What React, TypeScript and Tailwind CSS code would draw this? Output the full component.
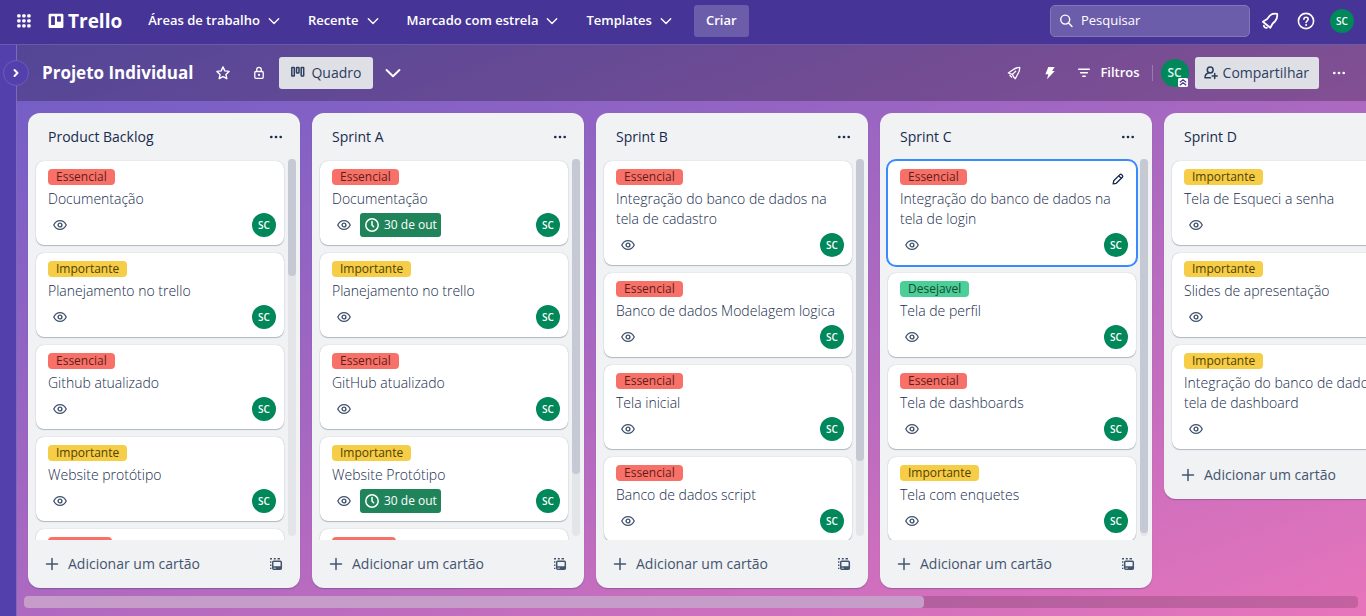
import type { ReactNode } from "react";

type Tag = "Essencial" | "Importante" | "Desejavel";

interface CardData {
  tag: Tag;
  title: string;
  due?: string;
  active?: boolean;
}

interface ListData {
  name: string;
  cards: CardData[];
  thumb?: number;
}

const lists: ListData[] = [
  {
    name: "Product Backlog",
    thumb: 31,
    cards: [
      { tag: "Essencial", title: "Documentação" },
      { tag: "Importante", title: "Planejamento no trello" },
      { tag: "Essencial", title: "Github atualizado" },
      { tag: "Importante", title: "Website protótipo" },
      { tag: "Essencial", title: "" },
    ],
  },
  {
    name: "Sprint A",
    thumb: 83.6,
    cards: [
      { tag: "Essencial", title: "Documentação", due: "30 de out" },
      { tag: "Importante", title: "Planejamento no trello" },
      { tag: "Essencial", title: "GitHub atualizado" },
      { tag: "Importante", title: "Website Protótipo", due: "30 de out" },
      { tag: "Essencial", title: "" },
    ],
  },
  {
    name: "Sprint B",
    thumb: 80.1,
    cards: [
      { tag: "Essencial", title: "Integração do banco de dados na tela de cadastro" },
      { tag: "Essencial", title: "Banco de dados Modelagem logica" },
      { tag: "Essencial", title: "Tela inicial" },
      { tag: "Essencial", title: "Banco de dados script" },
    ],
  },
  {
    name: "Sprint C",
    thumb: 99.2,
    cards: [
      { tag: "Essencial", title: "Integração do banco de dados na tela de login", active: true },
      { tag: "Desejavel", title: "Tela de perfil" },
      { tag: "Essencial", title: "Tela de dashboards" },
      { tag: "Importante", title: "Tela com enquetes" },
    ],
  },
  {
    name: "Sprint D",
    cards: [
      { tag: "Importante", title: "Tela de Esqueci a senha" },
      { tag: "Importante", title: "Slides de apresentação" },
      { tag: "Importante", title: "Integração do banco de dados na tela de dashboard" },
    ],
  },
];

const tagStyles: Record<Tag, string> = {
  Essencial: "bg-[#f87168] text-[#5d1f1a]",
  Importante: "bg-[#f5cd47] text-[#533f04]",
  Desejavel: "bg-[#4bce97] text-[#164b35]",
};

function Icon({ size = 16, box = 16, children }: { size?: number; box?: number; children: ReactNode }) {
  return (
    <svg
      width={size}
      height={size}
      viewBox={`0 0 ${box} ${box}`}
      fill="none"
      stroke="currentColor"
      strokeWidth="1.5"
      strokeLinecap="round"
      strokeLinejoin="round"
      className="shrink-0"
      aria-hidden="true"
    >
      {children}
    </svg>
  );
}

function ChevronDown({ size = 16 }: { size?: number }) {
  return (
    <Icon size={size}>
      <path d="m3.300 5.800 4.700 4.600 4.700-4.600" strokeWidth="1.400" />
    </Icon>
  );
}

function Dots() {
  return (
    <Icon>
      <g fill="currentColor" stroke="none">
        <circle cx="3.300" cy="8" r="1.350" />
        <circle cx="8" cy="8" r="1.350" />
        <circle cx="12.700" cy="8" r="1.350" />
      </g>
    </Icon>
  );
}

function AppsIcon() {
  const spots = [3, 8, 13];
  return (
    <Icon>
      <g fill="currentColor" stroke="none">
        {spots.map((y) => spots.map((x) => <rect key={`${x}-${y}`} x={x - 1.8} y={y - 1.8} width="3.4" height="3.4" rx="1" />))}
      </g>
    </Icon>
  );
}

function TrelloMark() {
  return (
    <svg width="16" height="16" viewBox="0 0 16 16" className="shrink-0" aria-hidden="true">
      <path
        fill="white"
        fillRule="evenodd"
        d="M2 .7h12c.8 0 1.4.6 1.4 1.400v11.600c0 .8-.6 1.400-1.400 1.400H2c-.8 0-1.400-.6-1.400-1.400V2.100C.6 1.300 1.200.7 2 .7ZM3.800 3.300c-.4 0-.7.3-.7.7v7.400c0 .4.300.7.700.7h2.400c.4 0 .7-.3.7-.7V4c0-.4-.3-.7-.7-.7H3.800Zm5.900 0c-.4 0-.7.3-.7.7v4.100c0 .4.300.7.700.7h2.500c.4 0 .7-.3.7-.7V4c0-.4-.3-.7-.7-.7H9.700Z"
      />
    </svg>
  );
}

function BellIcon() {
  return (
    <Icon size={20} box={20}>
      <g strokeWidth="1.800">
        <path d="M2.900 10.700 7.200 8 9.500 5c1.700-2.200 4.400-2.600 7.700-2.200.3 3.200-.2 5.800-2.300 7.700l-2.200 2-2.400 4.300Z" />
        <path d="M3.900 14.700c0 1.400 1.400 2.400 3 2" />
      </g>
    </Icon>
  );
}

function HelpIcon() {
  return (
    <Icon size={20} box={20}>
      <g strokeWidth="1.600">
        <circle cx="10" cy="10" r="7.600" />
        <path d="M7.900 8.300c0-1.300.9-2.100 2.100-2.100s2.200.8 2.200 2c0 1.500-2.100 1.700-2.100 3.300" />
      </g>
      <circle cx="10.100" cy="13.900" r="1" fill="currentColor" stroke="none" />
    </Icon>
  );
}

function EyeIcon() {
  return (
    <Icon>
      <path d="M1.800 8C3 5.300 5.300 3.700 8 3.700S13 5.300 14.200 8C13 10.700 10.700 12.300 8 12.300S3 10.700 1.800 8Z" strokeWidth="1.300" />
      <circle cx="8" cy="8" r="1.900" strokeWidth="1.400" />
    </Icon>
  );
}

function TemplateIcon() {
  return (
    <Icon>
      <path d="M2 2.700h2M5.800 2.700h2M9.500 2.700H12M2.700 5.200v1.500M2.700 8.500V10M2.700 11.800v1.300" strokeWidth="1.400" strokeLinecap="butt" />
      <rect x="4.700" y="5.200" width="8.600" height="8" rx="1" strokeWidth="1.500" />
      <path d="M5 11h8M8.500 12.300h4.500" strokeWidth="1.500" />
    </Icon>
  );
}

function Avatar({ large = false }: { large?: boolean }) {
  return (
    <span
      className={
        large
          ? "flex size-7 shrink-0 items-center justify-center rounded-full bg-[#00875a] text-xs font-semibold text-[#dcf5ea]"
          : "flex size-6 shrink-0 items-center justify-center rounded-full bg-[#00875a] text-[10px] font-semibold text-white"
      }
    >
      SC
    </span>
  );
}

function IconButton({ label, children }: { label: string; children: ReactNode }) {
  return (
    <button type="button" aria-label={label} className="flex size-8 shrink-0 items-center justify-center rounded-[3px] hover:bg-white/20">
      {children}
    </button>
  );
}

function TopBar() {
  return (
    <header className="flex h-[45px] shrink-0 items-center border-b border-[#6a5ba9] bg-[#463596] px-2 pb-0.5 text-[13px] font-semibold text-white">
      <IconButton label="Mais aplicativos">
        <AppsIcon />
      </IconButton>
      <a href="#" className="flex items-center gap-1 px-2 text-[19px] leading-6 font-bold">
        <TrelloMark />
        Trello
      </a>
      <nav className="ml-1.5 flex items-center gap-0.5">
        {["Áreas de trabalho", "Recente", "Marcado com estrela", "Templates"].map((item) => (
          <button key={item} type="button" className="flex h-8 items-center gap-1.5 rounded-[3px] px-3 whitespace-nowrap hover:bg-white/20">
            {item}
            <ChevronDown />
          </button>
        ))}
      </nav>
      <button type="button" className="ml-2 h-8 rounded-[3px] bg-[#6c5dab] px-3">
        Criar
      </button>
      <div className="ml-auto flex items-center gap-1">
        <label className="flex h-8 w-50 items-center gap-1.5 rounded-[5px] border border-[#8376b8] bg-[#6c5dab] px-2 font-normal">
          <Icon>
            <circle cx="6.200" cy="6.600" r="4.500" strokeWidth="1.400" />
            <path d="m9.600 10 3.400 3.400" strokeWidth="1.400" />
          </Icon>
          <input type="search" placeholder="Pesquisar" aria-label="Pesquisar" className="min-w-0 flex-1 bg-transparent outline-none placeholder:text-white" />
        </label>
        <IconButton label="Notificações">
          <BellIcon />
        </IconButton>
        <IconButton label="Informações">
          <HelpIcon />
        </IconButton>
        <IconButton label="Conta">
          <Avatar />
        </IconButton>
      </div>
    </header>
  );
}

function BoardBar() {
  return (
    <div className="flex h-14 shrink-0 items-center gap-1 bg-black/24 pr-[11px] pl-[15px] text-[13px] font-semibold text-white">
      <h1 className="px-2.5 text-[17px] font-bold whitespace-nowrap">Projeto Individual</h1>
      <IconButton label="Marcar com estrela">
        <Icon>
          <path d="m8 1.900 1.800 4 4.300.5-3.200 3 .9 4.300L8 11.600l-3.800 2.100.9-4.300-3.200-3 4.300-.5Z" strokeWidth="1.400" />
        </Icon>
      </IconButton>
      <IconButton label="Visibilidade">
        <Icon>
          <rect x="3.800" y="6.500" width="8.400" height="6.800" rx="1" strokeWidth="1.300" />
          <path d="M5.700 6.300V4.700a2.300 2.300 0 0 1 4.600 0v1.600" strokeWidth="1.300" />
          <circle cx="8" cy="9.900" r="1.100" fill="currentColor" stroke="none" />
        </Icon>
      </IconButton>
      <button type="button" className="flex h-8 items-center gap-1.5 rounded-[3px] bg-[#dfe0e6] px-3 text-sm font-medium text-[#2c3e5d]">
        <Icon size={14} box={14}>
          <rect x="0.800" y="1.500" width="2.500" height="8.600" rx="0.500" strokeWidth="1.500" />
          <rect x="5.500" y="1.500" width="2.500" height="5.600" rx="0.500" strokeWidth="1.500" />
          <rect x="10.200" y="1.500" width="2.500" height="8.600" rx="0.500" strokeWidth="1.500" />
        </Icon>
        Quadro
      </button>
      <IconButton label="Visualizações">
        <ChevronDown size={22} />
      </IconButton>
      <div className="ml-auto flex items-center gap-1">
        <IconButton label="Power-Ups">
          <Icon>
            <path d="M2.300 8 6.300 5.300C8.700 3.300 11 2.400 13.700 2.300c.1 2.400-.3 4.200-1.500 6L9.300 13.700 7.600 12 6.500 9.400 2.300 8Z" strokeWidth="1.300" />
            <path d="m6.500 9.400 3.200-3.200M3.900 10.300l1.700 1.700" strokeWidth="1.300" />
          </Icon>
        </IconButton>
        <IconButton label="Automação">
          <Icon>
            <path d="M6.300 2h6.400l-2.600 4.100h2.700L5 14.300l1.300-5.100H3.400Z" fill="currentColor" stroke="none" />
          </Icon>
        </IconButton>
        <button type="button" className="flex h-8 items-center gap-2 rounded-[3px] pr-1 pl-1.5">
          <Icon>
            <path d="M2.700 4.300h10.600M4.700 7.800h6.600M6.800 11.300h2.400" strokeWidth="1.500" />
          </Icon>
          Filtros
        </button>
        <span className="mx-1 h-4 w-px bg-white/25" />
        <span className="relative mr-0.5">
          <Avatar large />
          <svg width="10" height="9" viewBox="0 0 10 9" className="absolute right-px bottom-0" aria-hidden="true">
            <rect width="10" height="9" rx="1.500" fill="white" />
            <path d="M1.800 4.200 5 1.800l3.200 2.400M1.800 7.200 5 4.800l3.200 2.400" fill="none" stroke="#4834a0" strokeWidth="1.300" />
          </svg>
        </span>
        <button type="button" className="flex h-8 items-center gap-1 rounded-[3px] bg-[#dfe0e6] pr-2.5 pl-2 text-sm font-medium text-[#2c3e5d]">
          <Icon>
            <circle cx="7.200" cy="5" r="2.900" />
            <path d="M5.600 7.800C3.300 8.600 2 10 2 12.700h5.500M11.700 8.500v5M9.200 11h5" />
          </Icon>
          Compartilhar
        </button>
        <IconButton label="Menu do quadro">
          <Dots />
        </IconButton>
      </div>
    </div>
  );
}

function Card({ card }: { card: CardData }) {
  return (
    <article
      className={
        card.active
          ? "relative shrink-0 rounded-lg bg-white py-2 pr-2 pl-3 outline-2 outline-[#388bff]"
          : "relative shrink-0 rounded-lg bg-white py-2 pr-2 pl-3 shadow-[0_1px_1px_#091e4240,0_0_1px_#091e424f]"
      }
    >
      {card.title ? (
        <>
          <span className={`mb-1 block h-4 w-fit rounded px-2 text-xs leading-4 font-medium ${tagStyles[card.tag]}`}>{card.tag}</span>
          <h3 className="mb-1 text-sm leading-5 font-light text-[#172b4d]">{card.title}</h3>
          <div className="flex h-6 items-center text-[#44546f]">
            <span className="flex size-6 items-center justify-center">
              <EyeIcon />
            </span>
            {card.due && (
              <span className="ml-1 flex h-6 items-center gap-1 rounded-[3px] bg-[#1f845a] px-1 text-xs font-medium text-white">
                <Icon>
                  <circle cx="8" cy="8" r="6.200" />
                  <path d="M8 4.500V8l1.600 1.800" />
                </Icon>
                {card.due}
              </span>
            )}
            <span className="ml-auto">
              <Avatar />
            </span>
          </div>
        </>
      ) : (
        <span aria-label={card.tag} className={`block h-4 w-16 rounded ${tagStyles[card.tag]}`} />
      )}
      {card.active && (
        <button type="button" aria-label="Editar cartão" className="absolute top-0.5 right-0.5 flex size-8 items-center justify-center text-[#172b4d]">
          <Icon size={14}>
            <path d="m2.500 13.500.6-3.500 7-7c.6-.6 1.400-.6 2 0l.9.9c.6.6.6 1.400 0 2l-7 7ZM9 4.500 11.500 7" />
          </Icon>
        </button>
      )}
    </article>
  );
}

function List({ list }: { list: ListData }) {
  return (
    <section className="flex max-h-full w-68 shrink-0 flex-col rounded-xl bg-[#f1f2f4] shadow-[0_1px_1px_#091e4240]">
      <div className="flex h-[46px] shrink-0 items-center justify-between pt-0.5 pr-2 pl-5 text-[#172b4d]">
        <h2 className="text-sm font-medium">{list.name}</h2>
        <button type="button" aria-label={`Ações de ${list.name}`} className="flex size-8 items-center justify-center">
          <Dots />
        </button>
      </div>
      <div className="flex min-h-0 gap-0.5 pr-1">
        <div className="flex min-w-0 flex-1 flex-col gap-2 overflow-y-auto py-0.5 pr-0.5 pl-2 [scrollbar-width:none]">
          {list.cards.map((card, index) => (
            <Card key={index} card={card} />
          ))}
        </div>
        <div className="mb-1 w-2 shrink-0">
          {list.thumb && (
            <div className="h-full rounded bg-[#e3e5e9]">
              <div className="rounded bg-[#c4c9d3]" style={{ height: `${list.thumb}%` }} />
            </div>
          )}
        </div>
      </div>
      <div className="flex h-12 shrink-0 items-center justify-between pr-2 pl-4 text-[#44546f]">
        <button type="button" className="flex h-8 items-center gap-2 text-sm font-medium">
          <Icon>
            <path d="M8 2.500v11M2.500 8h11" />
          </Icon>
          Adicionar um cartão
        </button>
        <button type="button" aria-label="Criar a partir de modelo" className="flex size-8 items-center justify-center">
          <TemplateIcon />
        </button>
      </div>
    </section>
  );
}

export default function App() {
  return (
    <div className="flex h-screen flex-col overflow-hidden font-['Open_Sans',sans-serif]">
      <TopBar />
      <div className="flex min-h-0 flex-1">
        <aside className="relative z-10 w-[17px] shrink-0 border-r border-[#7a6bbd] bg-[#5340ac]">
          <button
            type="button"
            aria-label="Expandir barra lateral"
            className="absolute top-[15px] left-[3px] flex size-[26px] items-center justify-center rounded-full border border-[#6c5dbb] bg-[#5340ac] text-white"
          >
            <Icon>
              <path d="m6.500 5 3 3-3 3" strokeWidth="2" />
            </Icon>
          </button>
        </aside>
        <main className="flex min-w-0 flex-1 flex-col bg-linear-[160deg] from-[#6e5dc6] to-[#e774bb]">
          <BoardBar />
          <div className="flex min-h-0 flex-1 items-start gap-3 overflow-x-auto pt-3 pb-2 pl-[11px] [scrollbar-width:none]">
            {lists.map((list) => (
              <List key={list.name} list={list} />
            ))}
          </div>
          <div className="mr-2 mb-2 ml-[7px] h-3 shrink-0 rounded bg-black/15">
            <div className="h-full w-[67.500%] rounded bg-[#c69dc8]" />
          </div>
        </main>
      </div>
    </div>
  );
}
